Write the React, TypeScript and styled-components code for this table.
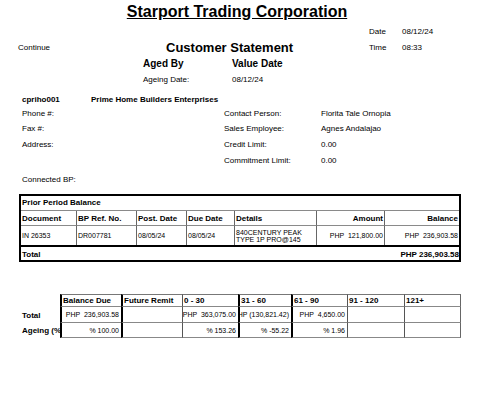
import React from 'react';
import styled, { createGlobalStyle } from 'styled-components';

const GlobalStyle = createGlobalStyle`
  html, body {
    margin: 0;
    padding: 0;
    background: #fff;
  }
  body {
    font-family: "Liberation Sans", Arial, sans-serif;
    color: #000;
  }
  * {
    box-sizing: border-box;
  }
`;

const Page = styled.div`
  width: 490px;
  height: 402px;
  overflow: hidden;
  background: #fff;
`;

const Title = styled.h1`
  margin: 0;
  width: 474px;
  height: 23px;
  line-height: 23px;
  text-align: center;
  font-size: 16px;
  font-weight: bold;
  text-decoration: underline;
`;

const HeaderGrid = styled.div`
  display: grid;
  grid-template-columns: 143px 89px 137px 33px 1fr;
  grid-auto-rows: 16px;
  align-items: center;
  font-size: 8px;
  white-space: nowrap;
`;

const HeadText = styled.div<{ $col: number; $indent?: number }>`
  grid-column: ${p => p.$col};
  padding-left: ${p => p.$indent || 0}px;
`;

const ReportName = styled.div`
  grid-column: 2 / 4;
  padding-left: 23px;
  font-size: 13px;
  font-weight: bold;
`;

const AgedHeading = styled.div<{ $col: number }>`
  grid-column: ${p => p.$col};
  font-size: 10px;
  font-weight: bold;
`;

const InfoGrid = styled.div`
  display: grid;
  grid-template-columns: 69px 133px 97px 1fr;
  grid-template-rows: 14px 15px 15px 16px 16px;
  align-items: center;
  margin-top: 5px;
  padding-left: 22px;
  font-size: 8px;
  white-space: nowrap;
`;

const InfoText = styled.div<{ $col: number; $bold?: boolean }>`
  grid-column: ${p => p.$col};
  font-weight: ${p => (p.$bold ? 'bold' : 'normal')};
`;

const ConnectedLine = styled.div`
  margin-top: 4px;
  height: 16px;
  line-height: 16px;
  padding-left: 22px;
  font-size: 8px;
`;

const StatementBox = styled.div`
  margin: 6px 0 0 19px;
  width: 442px;
  border: 2px solid #000;
  display: grid;
  grid-template-columns: 56px 60px 50px 48px 82px 68px 74px;
  white-space: nowrap;
`;

const SectionTitle = styled.div`
  grid-column: 1 / -1;
  height: 15px;
  line-height: 14px;
  padding-left: 1px;
  border-bottom: 1px solid #8a8a8a;
  font-size: 8px;
  font-weight: bold;
`;

const ColHead = styled.div<{ $right?: boolean; $last?: boolean }>`
  height: 15px;
  padding: 2px 1px 0 1px;
  line-height: 12px;
  border-bottom: 1px solid #8a8a8a;
  border-right: ${p => (p.$last ? 'none' : '1px solid #666')};
  text-align: ${p => (p.$right ? 'right' : 'left')};
  font-size: 8px;
  font-weight: bold;
  overflow: hidden;
`;

const RowCell = styled.div<{ $right?: boolean; $last?: boolean }>`
  height: 19px;
  padding: 0 1px;
  display: flex;
  align-items: center;
  justify-content: ${p => (p.$right ? 'flex-end' : 'flex-start')};
  border-right: ${p => (p.$last ? 'none' : '1px solid #666')};
  font-size: 7px;
  line-height: 7px;
  white-space: pre;
  overflow: hidden;
`;

const TotalRow = styled.div`
  grid-column: 1 / -1;
  height: 15px;
  border-top: 2px solid #000;
  display: flex;
  justify-content: space-between;
  align-items: flex-end;
  padding: 0 0 1px 1px;
  line-height: 9px;
  font-size: 8px;
  font-weight: bold;
`;

const AgeingGrid = styled.div`
  margin: 32px 0 0 20px;
  display: grid;
  grid-template-columns: 40px 61px 61px 56px 53px 56px 57px 57px;
  grid-template-rows: 13px 16px 15px;
  width: 441px;
  white-space: nowrap;
`;

const RowLabel = styled.div`
  padding-left: 2px;
  display: flex;
  align-items: center;
  font-size: 8px;
  font-weight: bold;
  overflow: hidden;
`;

const AgeCell = styled.div<{ $thick?: boolean; $top?: boolean; $last?: boolean; $right?: boolean; $head?: boolean }>`
  border-left: ${p => (p.$thick ? '2px solid #000' : '1px solid #555')};
  border-right: ${p => (p.$last ? '1px solid #666' : 'none')};
  border-top: ${p => (p.$top ? '1px solid #777' : 'none')};
  border-bottom: 1px solid #888;
  display: flex;
  align-items: center;
  justify-content: ${p => (p.$right ? 'flex-end' : 'flex-start')};
  padding: 0 2px 0 1px;
  font-size: ${p => (p.$head ? '8px' : '7px')};
  font-weight: ${p => (p.$head ? 'bold' : 'normal')};
  white-space: pre;
  overflow: hidden;
`;

const statementCols = [
  { label: 'Document', value: 'IN 26353' },
  { label: 'BP Ref. No.', value: 'DR007781' },
  { label: 'Post. Date', value: '08/05/24' },
  { label: 'Due Date', value: '08/05/24' },
  { label: 'Details', value: '840CENTURY PEAK\nTYPE 1P PRO@145' },
  { label: 'Amount', value: 'PHP  121,800.00', right: true },
  { label: 'Balance', value: 'PHP  236,903.58', right: true },
];

const ageing = [
  { head: 'Balance Due', total: 'PHP  236,903.58', pct: '% 100.00', thick: true },
  { head: 'Future Remit', total: '', pct: '', thick: true },
  { head: '0 - 30', total: 'PHP  363,075.00', pct: '% 153.26', thick: false },
  { head: '31 - 60', total: 'PHP (130,821.42)', pct: '% -55.22', thick: true },
  { head: '61 - 90', total: 'PHP  4,650.00', pct: '% 1.96', thick: true },
  { head: '91 - 120', total: '', pct: '', thick: false },
  { head: '121+', total: '', pct: '', thick: false },
];

export default function App() {
  const lastCol = statementCols.length - 1;
  const lastAge = ageing.length - 1;
  return (
    <Page>
      <GlobalStyle />
      <Title>Starport Trading Corporation</Title>

      <HeaderGrid>
        <HeadText $col={4}>Date</HeadText>
        <HeadText $col={5}>08/12/24</HeadText>

        <HeadText $col={1} $indent={18}>Continue</HeadText>
        <ReportName>Customer Statement</ReportName>
        <HeadText $col={4}>Time</HeadText>
        <HeadText $col={5}>08:33</HeadText>

        <AgedHeading $col={2}>Aged By</AgedHeading>
        <AgedHeading $col={3}>Value Date</AgedHeading>

        <HeadText $col={2}>Ageing Date:</HeadText>
        <HeadText $col={3}>08/12/24</HeadText>
      </HeaderGrid>

      <InfoGrid>
        <InfoText $col={1} $bold>cpriho001</InfoText>
        <InfoText $col={2} $bold>Prime Home Builders Enterprises</InfoText>
        <InfoText $col={3} />

        <InfoText $col={1}>Phone #:</InfoText>
        <InfoText $col={3}>Contact Person:</InfoText>
        <InfoText $col={4}>Florita Tale Ornopia</InfoText>

        <InfoText $col={1}>Fax #:</InfoText>
        <InfoText $col={3}>Sales Employee:</InfoText>
        <InfoText $col={4}>Agnes Andalajao</InfoText>

        <InfoText $col={1}>Address:</InfoText>
        <InfoText $col={3}>Credit Limit:</InfoText>
        <InfoText $col={4}>0.00</InfoText>

        <InfoText $col={3}>Commitment Limit:</InfoText>
        <InfoText $col={4}>0.00</InfoText>
      </InfoGrid>

      <ConnectedLine>Connected BP:</ConnectedLine>

      <StatementBox>
        <SectionTitle>Prior Period Balance</SectionTitle>
        {statementCols.map((c, i) => (
          <ColHead key={c.label} $right={c.right} $last={i === lastCol}>
            {c.label}
          </ColHead>
        ))}
        {statementCols.map((c, i) => (
          <RowCell key={c.label} $right={c.right} $last={i === lastCol}>
            {c.value}
          </RowCell>
        ))}
        <TotalRow>
          <span>Total</span>
          <span>PHP 236,903.58</span>
        </TotalRow>
      </StatementBox>

      <AgeingGrid>
        <RowLabel />
        {ageing.map((a, i) => (
          <AgeCell key={a.head} $thick={a.thick} $top $head $last={i === lastAge}>
            {a.head}
          </AgeCell>
        ))}

        <RowLabel>Total</RowLabel>
        {ageing.map((a, i) => (
          <AgeCell key={a.head} $thick={a.thick} $right $last={i === lastAge}>
            {a.total}
          </AgeCell>
        ))}

        <RowLabel>Ageing (%)</RowLabel>
        {ageing.map((a, i) => (
          <AgeCell key={a.head} $thick={a.thick} $right $last={i === lastAge}>
            {a.pct}
          </AgeCell>
        ))}
      </AgeingGrid>
    </Page>
  );
}
